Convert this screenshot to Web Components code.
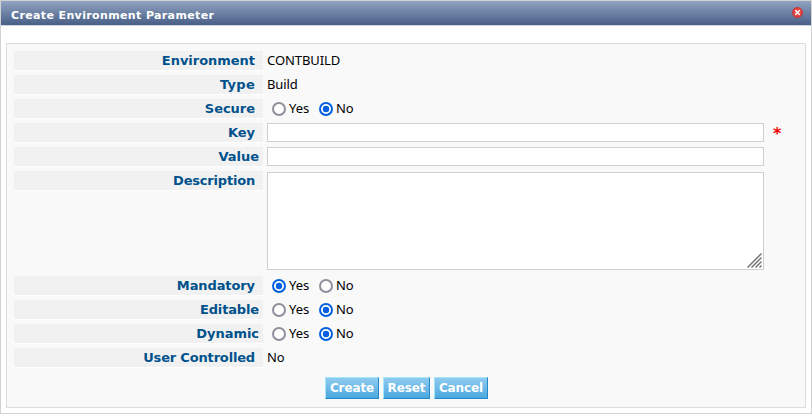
<!DOCTYPE html>
<html lang="en">
<head>
<meta charset="utf-8">
<title>Create Environment Parameter</title>
<style>
html,body{margin:0;height:100%;background:#fff}
body{font:13px/19px "Noto Sans","DejaVu Sans",sans-serif;letter-spacing:-.08px;color:#000}
</style>
</head>
<body>
<dialog-window heading="Create Environment Parameter">
  <form-row label="Environment">CONTBUILD</form-row>
  <form-row label="Type" style="--track:.3px">Build</form-row>
  <form-row label="Secure"><yes-no value="no"></yes-no></form-row>
  <form-row label="Key" required><text-box></text-box></form-row>
  <form-row label="Value" flush><text-box></text-box></form-row>
  <form-row label="Description" tall style="--track:-.2px"><text-box multiline></text-box></form-row>
  <form-row label="Mandatory" style="--track:-.1px"><yes-no value="yes"></yes-no></form-row>
  <form-row label="Editable" flush style="--track:-.15px"><yes-no value="no"></yes-no></form-row>
  <form-row label="Dynamic" flush><yes-no value="no"></yes-no></form-row>
  <form-row label="User Controlled" style="--track:-.17px">No</form-row>
  <action-button slot="actions" style="width:54px">Create</action-button>
  <action-button slot="actions" style="width:47px">Reset</action-button>
  <action-button slot="actions" style="width:54px">Cancel</action-button>
</dialog-window>
<script>
const define = (name, render) => customElements.define(name, class extends HTMLElement {
  connectedCallback() {
    if (!this.shadowRoot) this.attachShadow({ mode: 'open' }).innerHTML = render(this);
  }
});

define('close-icon', () => `
<style>:host{display:block;width:11px;height:11px}svg{display:block}</style>
<svg width="11" height="11" viewBox="0 0 11 11"><circle cx="5.5" cy="5.5" r="5.4" fill="#c9333a"/><circle cx="5.5" cy="5.5" r="4.2" fill="#e8483f"/><path d="M3.300 3.300l4.400 4.400m0-4.400l-4.400 4.400" stroke="#fff" stroke-width="1.5"/></svg>`);

define('dialog-window', el => `
<style>
:host{display:flex;flex-direction:column;box-sizing:border-box;height:414px;border:1px solid #d2d2d2;background:#fff}
header{display:flex;justify-content:space-between;height:24px;flex:none;padding:0 8px 0 10px;background:linear-gradient(#91a3c1,#485f87);border-bottom:1px solid #d0d4da}
h1{margin:0;font:bold 11px/29px "DejaVu Sans",sans-serif;color:#fff;letter-spacing:.37px}
close-icon{margin-top:6px}
main{flex:1;margin:17px 5px 5px;border:1px solid #dcdcdc;background:#f9f9f9;padding:7px 7px 0}
footer{display:flex;gap:4px;padding:5px 0 0 311px}
</style>
<header><h1>${el.getAttribute('heading')}</h1><close-icon></close-icon></header>
<main><slot></slot><footer><slot name="actions"></slot></footer></main>`);

define('form-row', el => `
<style>
:host{display:flex;height:24px}
:host([tall]){height:105px}
.label{box-sizing:border-box;width:249px;height:20px;flex:none;padding-right:8px;background:#f1f1f1;border-bottom:1px solid #fff;text-align:right;font:bold 13px/19px "DejaVu Sans",sans-serif;color:#00518c;letter-spacing:var(--track,-.03px)}
:host([flush]) .label{padding-right:4px}
.value{margin-left:4px}
.star{margin-left:9px;font:bold 16px/22px "DejaVu Sans",sans-serif;color:#e00}
</style>
<div class="label">${el.getAttribute('label')}</div><div class="value"><slot></slot></div>${el.hasAttribute('required') ? '<div class="star">*</div>' : ''}`);

define('radio-dot', el => `
<style>
:host{display:block;width:14px;height:14px;flex:none}svg{display:block}
</style>
<svg width="14" height="14" viewBox="0 0 14 14">${el.hasAttribute('on')
  ? '<circle cx="7" cy="7" r="6" fill="#fff" stroke="#0060df" stroke-width="2"/><circle cx="7" cy="7" r="3.2" fill="#0060df"/>'
  : '<circle cx="7" cy="7" r="6" fill="#fff" stroke="#8f8f9d" stroke-width="2"/>'}</svg>`);

define('yes-no', el => {
  const yes = el.getAttribute('value') === 'yes';
  return `
<style>
:host{display:flex;padding-left:5px}
radio-dot{margin-top:3px}
span{width:33px;box-sizing:border-box;padding-left:3px}
</style>
<radio-dot ${yes ? 'on' : ''}></radio-dot><span>Yes</span><radio-dot ${yes ? '' : 'on'}></radio-dot><span>No</span>`;
});

define('text-box', el => `
<style>
:host{display:flex;justify-content:flex-end;align-items:flex-end;box-sizing:border-box;width:497px;height:19px;border:1px solid #cfcfcf;background:#fff}
:host([multiline]){height:98px;margin-top:1px}
svg{display:block;margin:0 1px 1px 0}
</style>${el.hasAttribute('multiline')
  ? '<svg width="15" height="15" viewBox="0 0 15 15"><path d="M.5 14.500l14-14M4.500 14.500l10-10M8.500 14.500l6-6M12.500 14.500l2-2" fill="none" stroke="#757575" stroke-width="1.500"/></svg>' : ''}`);

define('action-button', () => `
<style>
:host{display:block;box-sizing:border-box;height:22px;border:1px solid #a4e6fa;border-right-color:#2288c9;border-bottom-color:#2288c9;background:linear-gradient(#8fcbef,#4ca8df);color:#fff;text-align:center;font:bold 12px/20px "DejaVu Sans",sans-serif;letter-spacing:-.1px;white-space:nowrap}
</style><slot></slot>`);
</script>
</body>
</html>
